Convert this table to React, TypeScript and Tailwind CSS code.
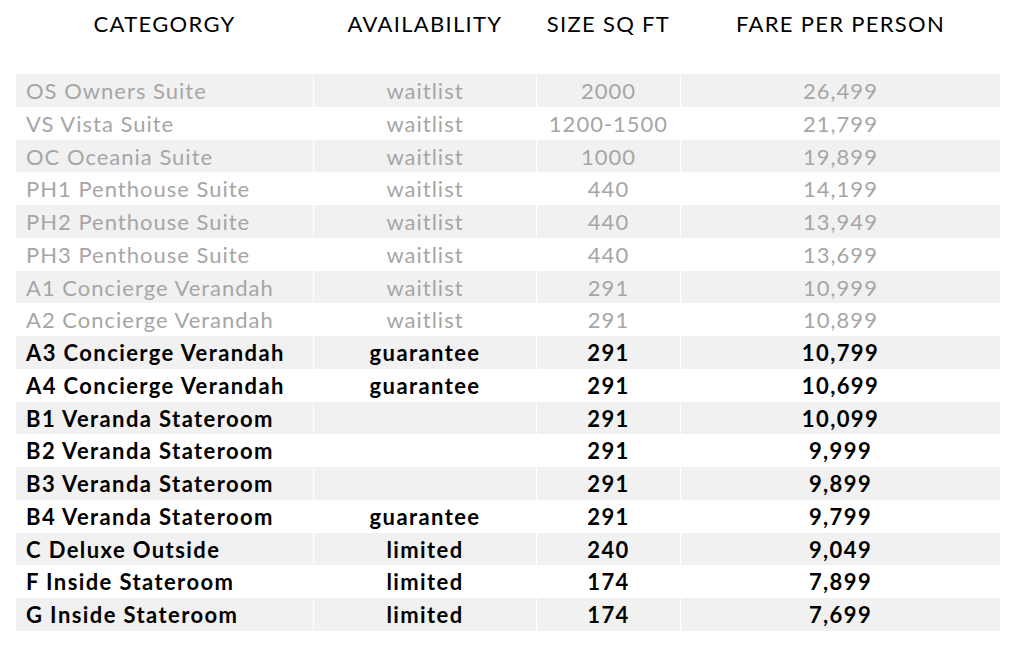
const rows = [
  { name: 'OS Owners Suite', avail: 'waitlist', size: '2000', fare: '26,499', muted: true },
  { name: 'VS Vista Suite', avail: 'waitlist', size: '1200-1500', fare: '21,799', muted: true },
  { name: 'OC Oceania Suite', avail: 'waitlist', size: '1000', fare: '19,899', muted: true },
  { name: 'PH1 Penthouse Suite', avail: 'waitlist', size: '440', fare: '14,199', muted: true },
  { name: 'PH2 Penthouse Suite', avail: 'waitlist', size: '440', fare: '13,949', muted: true },
  { name: 'PH3 Penthouse Suite', avail: 'waitlist', size: '440', fare: '13,699', muted: true },
  { name: 'A1 Concierge Verandah', avail: 'waitlist', size: '291', fare: '10,999', muted: true },
  { name: 'A2 Concierge Verandah', avail: 'waitlist', size: '291', fare: '10,899', muted: true },
  { name: 'A3 Concierge Verandah', avail: 'guarantee', size: '291', fare: '10,799', muted: false },
  { name: 'A4 Concierge Verandah', avail: 'guarantee', size: '291', fare: '10,699', muted: false },
  { name: 'B1 Veranda Stateroom', avail: '', size: '291', fare: '10,099', muted: false },
  { name: 'B2 Veranda Stateroom', avail: '', size: '291', fare: '9,999', muted: false },
  { name: 'B3 Veranda Stateroom', avail: '', size: '291', fare: '9,899', muted: false },
  { name: 'B4 Veranda Stateroom', avail: 'guarantee', size: '291', fare: '9,799', muted: false },
  { name: 'C Deluxe Outside', avail: 'limited', size: '240', fare: '9,049', muted: false },
  { name: 'F Inside Stateroom', avail: 'limited', size: '174', fare: '7,899', muted: false },
  { name: 'G Inside Stateroom', avail: 'limited', size: '174', fare: '7,699', muted: false },
];

const cols = 'grid grid-cols-[297px_222px_143px_319px] gap-x-px';

export default function App() {
  return (
    <div className="w-[1022px] h-[648px] bg-white px-4 font-['Lato',sans-serif] text-[22px]">
      {/* header */}
      <div className={`${cols} h-[46px] items-center text-black tracking-[1.3px]`}>
        <div className="text-center">CATEGORGY</div>
        <div className="text-center">AVAILABILITY</div>
        <div className="text-center">SIZE SQ FT</div>
        <div className="text-center">FARE PER PERSON</div>
      </div>

      <div className="mt-[28px]">
        {rows.map((r, i) => {
          const bg = i % 2 === 0 ? 'bg-[#f1f1f1]' : 'bg-white';
          const txt = r.muted
            ? 'text-[#a6a6a6] font-normal tracking-[1px]'
            : 'text-black font-bold tracking-[1.4px]';
          return (
            <div key={r.name} className={`${cols} h-[32.75px] ${txt}`}>
              <div className={`${bg} flex items-center pl-[10px]`}>{r.name}</div>
              <div className={`${bg} flex items-center justify-center`}>{r.avail}</div>
              <div className={`${bg} flex items-center justify-center`}>{r.size}</div>
              <div className={`${bg} flex items-center justify-center`}>{r.fare}</div>
            </div>
          );
        })}
      </div>
    </div>
  );
}
